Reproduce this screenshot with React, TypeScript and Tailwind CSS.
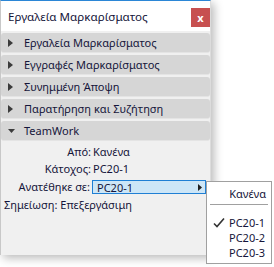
import React from "react";

const font = { fontFamily: '"Noto Sans", "Open Sans", sans-serif' };

const sections = [
  "Εργαλεία Μαρκαρίσματος",
  "Εγγραφές Μαρκαρίσματος",
  "Συνημμένη Άποψη",
  "Παρατήρηση και Συζήτηση",
];

function RightTri() {
  return (
    <svg width="5" height="8" viewBox="0 0 5 8" className="shrink-0">
      <path d="M0 0 L5 4 L0 8 Z" fill="#3c3c3c" />
    </svg>
  );
}

function DownTri() {
  return (
    <svg width="7" height="4" viewBox="0 0 7 4" className="shrink-0">
      <path d="M0 0 L7 0 L3.5 4 Z" fill="#3c3c3c" />
    </svg>
  );
}

function SectionRow({ label, open }: { label: string; open?: boolean }) {
  return (
    <div className="flex h-[20px] items-center rounded-[3px] bg-[#d6d6d6] border-b border-[#e4e4e4]">
      <div className="flex w-[23px] items-center pl-[7px]">{open ? <DownTri /> : <RightTri />}</div>
      <span className="text-[11px] leading-none text-[#15153a]">{label}</span>
    </div>
  );
}

export default function App() {
  return (
    <div className="relative h-[267px] w-[274px] bg-white" style={font}>
      <div className="flex h-[255px] w-[211px] flex-col border-t border-l border-r border-t-[#2b86d6] border-l-[#c8c8c8] border-r-[#dcdcdc] bg-[#f0f0f0] shadow-[3px_3px_9px_rgba(0,0,0,0.28)]">
        <div className="flex h-[30px] items-start justify-between bg-white pl-[7px]">
          <span className="mt-[8px] text-[11.6px] leading-[16px] text-[#15153a]">Εργαλεία Μαρκαρίσματος</span>
          <button className="mt-[7px] flex h-[19px] w-[19px] items-center justify-center bg-[#c75050] text-[11px] font-bold leading-none text-white">
            x
          </button>
        </div>
        <div className="mt-[2px] flex flex-col gap-[2px]">
          {sections.map((s) => (
            <SectionRow key={s} label={s} />
          ))}
          <SectionRow label="TeamWork" open />
        </div>
        <div className="mt-[2px] flex flex-col text-[11px] text-[#15153a]">
          <div className="flex h-[18px] items-center">
            <span className="w-[90px] text-right">Από:</span>
            <span className="ml-[2px]">Κανένα</span>
          </div>
          <div className="flex h-[17px] items-center">
            <span className="w-[90px] text-right">Κάτοχος:</span>
            <span className="ml-[2px]">PC20-1</span>
          </div>
          <div className="flex h-[18px] items-center">
            <span className="w-[89px] text-right">Ανατέθηκε σε:</span>
            <div className="ml-[2px] flex h-[14px] w-[114px] items-center justify-between border border-[#1f7fd4] bg-[#cde6f7] pl-[4px] pr-[3px]">
              <span className="leading-none">PC20-1</span>
              <svg width="4" height="7" viewBox="0 0 4 7">
                <path d="M0 0 L4 3.5 L0 7 Z" fill="#202020" />
              </svg>
            </div>
          </div>
          <div className="flex h-[18px] items-center pl-[3px]">
            <span>Σημείωση: Επεξεργάσιμη</span>
          </div>
        </div>
      </div>

      <div className="absolute left-[206px] top-[181px] flex h-[83px] w-[66px] flex-col border border-[#a0a0a0] bg-white text-[11px] leading-none text-[#15153a]">
        <div className="flex h-[22px] items-center justify-end pr-[5px]">Κανένα</div>
        <div className="mx-[3px] h-px bg-[#a0a0a0]" />
        <div className="mt-[10px] flex h-[15px] items-center">
          <svg width="22" height="12" viewBox="0 0 22 12" className="shrink-0">
            <path d="M7 6.5 L10 9.5 L17 1.5" fill="none" stroke="#333" strokeWidth="1.6" />
          </svg>
          <span>PC20-1</span>
        </div>
        <div className="flex h-[15px] items-center pl-[22px]">PC20-2</div>
        <div className="flex h-[15px] items-center pl-[22px]">PC20-3</div>
      </div>
    </div>
  );
}
